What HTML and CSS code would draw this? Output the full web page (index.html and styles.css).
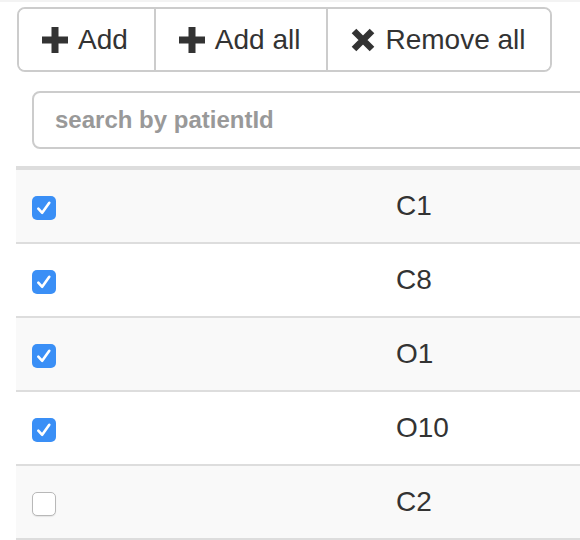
FILE: index.html
```html
<!DOCTYPE html>
<html>
<head>
<meta charset="utf-8">
<link rel="stylesheet" href="styles.css">
</head>
<body>
<div class="page">
  <div class="btn-group">
    <button class="btn"><svg class="icon" width="26" height="26" viewBox="0 0 26 26"><rect x="0" y="9.5" width="26" height="7" fill="#333"/><rect x="9.5" y="0" width="7" height="26" fill="#333"/></svg><span>Add</span></button>
    <button class="btn"><svg class="icon" width="26" height="26" viewBox="0 0 26 26"><rect x="0" y="9.5" width="26" height="7" fill="#333"/><rect x="9.5" y="0" width="7" height="26" fill="#333"/></svg><span>Add all</span></button>
    <button class="btn btn-last"><svg class="icon" width="24" height="24" viewBox="0 0 24 24"><path d="M3 3 L21 21 M21 3 L3 21" stroke="#333" stroke-width="6.5" stroke-linecap="butt"/></svg><span>Remove all</span></button>
  </div>
  <div class="search">
    <input class="search-input" type="text" placeholder="search by patientId">
  </div>
  <div class="table">
    <div class="row striped">
      <div class="cell"><span class="cb checked"><svg width="24" height="24" viewBox="0 0 24 24"><path d="M6.3 12.6 L10.2 16.8 L17.3 6.8" fill="none" stroke="#fff" stroke-width="2.6" stroke-linecap="round" stroke-linejoin="round"/></svg></span></div>
      <div class="cell">C1</div>
    </div>
    <div class="row">
      <div class="cell"><span class="cb checked"><svg width="24" height="24" viewBox="0 0 24 24"><path d="M6.3 12.6 L10.2 16.8 L17.3 6.8" fill="none" stroke="#fff" stroke-width="2.6" stroke-linecap="round" stroke-linejoin="round"/></svg></span></div>
      <div class="cell">C8</div>
    </div>
    <div class="row striped">
      <div class="cell"><span class="cb checked"><svg width="24" height="24" viewBox="0 0 24 24"><path d="M6.3 12.6 L10.2 16.8 L17.3 6.8" fill="none" stroke="#fff" stroke-width="2.6" stroke-linecap="round" stroke-linejoin="round"/></svg></span></div>
      <div class="cell">O1</div>
    </div>
    <div class="row">
      <div class="cell"><span class="cb checked"><svg width="24" height="24" viewBox="0 0 24 24"><path d="M6.3 12.6 L10.2 16.8 L17.3 6.8" fill="none" stroke="#fff" stroke-width="2.6" stroke-linecap="round" stroke-linejoin="round"/></svg></span></div>
      <div class="cell">O10</div>
    </div>
    <div class="row striped">
      <div class="cell"><span class="cb"></span></div>
      <div class="cell">C2</div>
    </div>
  </div>
</div>
</body>
</html>
```
FILE: styles.css
```css
html, body {
  margin: 0;
  padding: 0;
  overflow: hidden;
  background: #fff;
}
body {
  font-family: "Liberation Sans", Arial, sans-serif;
  color: #333;
  border-top: 2px solid #f3f3f3;
}
.page {
  padding: 5px 0 0 16px;
  overflow: hidden;
}
.btn-group {
  display: inline-flex;
  margin-left: 1px;
  border: 2px solid #ccc;
  border-radius: 8px;
  overflow: hidden;
}
.btn {
  display: flex;
  align-items: center;
  gap: 10px;
  height: 61px;
  padding: 0 26px 0 23px;
  margin: 0;
  border: none;
  border-left: 2px solid #ccc;
  background: #fff;
  font-family: "Liberation Sans", Arial, sans-serif;
  font-size: 28px;
  color: #333;
}
.btn:first-child {
  border-left: none;
}
.btn-last {
  padding: 0 24px 0 23px;
}
.icon {
  flex: none;
}
.search {
  margin: 19px 0 0 16px;
}
.search-input {
  display: block;
  box-sizing: border-box;
  width: calc(100% + 20px);
  height: 58px;
  border: 2px solid #ccc;
  border-radius: 8px;
  padding: 0 0 0 21px;
  font-family: "Liberation Sans", Arial, sans-serif;
  font-size: 24px;
  outline: none;
  background: #fff;
}
.search-input::placeholder {
  color: #999;
  font-weight: bold;
}
.table {
  margin-top: 17px;
  width: calc(100% + 20px);
  border-top: 4px solid #ddd;
}
.row {
  display: grid;
  grid-template-columns: 364px 1fr;
  height: 72px;
  border-bottom: 2px solid #ddd;
}
.row.striped {
  background: #f9f9f9;
}
.cell {
  display: flex;
  align-items: center;
  padding: 0 16px;
  font-size: 28px;
  color: #333;
}
.cb {
  display: block;
  box-sizing: border-box;
  width: 24px;
  height: 24px;
  border-radius: 5px;
  margin-top: 4px;
  background: #fff;
  border: 1px solid #b8b8b8;
  box-shadow: 0 1px 1px rgba(0,0,0,0.08);
}
.cb svg {
  display: block;
}
.cb.checked {
  background: #3a8ff6;
  border: none;
  box-shadow: none;
}
```
